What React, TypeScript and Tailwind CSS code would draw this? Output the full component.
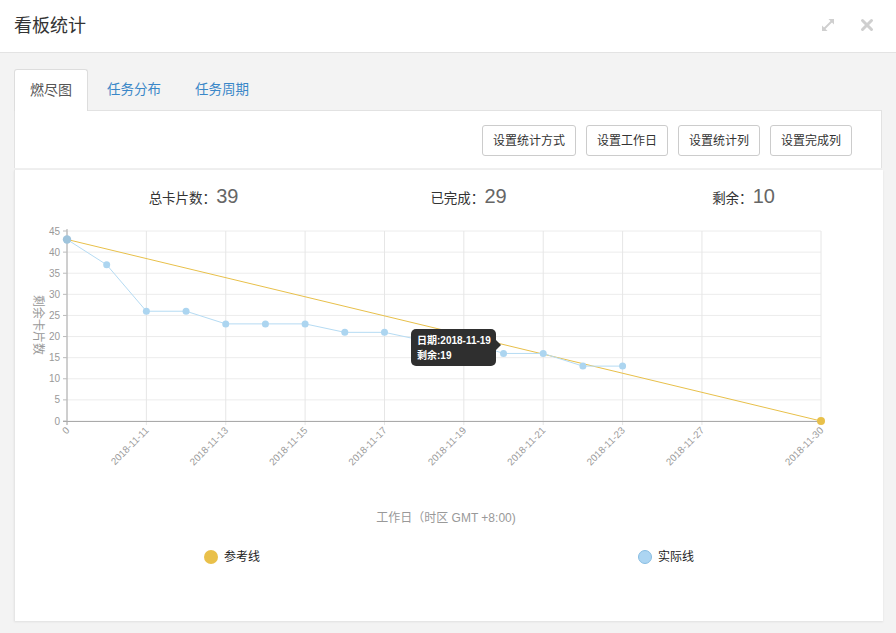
import React from "react";

const FONT = '"Liberation Sans", "Noto Sans CJK SC", sans-serif';

const step = (820 - 66) / 19;
const xAt = (i: number) => 66 + i * step;
const yAt = (v: number) => 422 - v * (190 / 45);

const actual = [43, 37, 26, 26, 23, 23, 23, 21, 21, 19, 19, 16, 16, 13, 13];
const labels: [number, string][] = [
  [0, "0"],
  [2, "2018-11-11"],
  [4, "2018-11-13"],
  [6, "2018-11-15"],
  [8, "2018-11-17"],
  [10, "2018-11-19"],
  [12, "2018-11-21"],
  [14, "2018-11-23"],
  [16, "2018-11-27"],
  [19, "2018-11-30"],
];

function Chart() {
  const yTicks = [0, 5, 10, 15, 20, 25, 30, 35, 40, 45];
  const pts = actual.map((v, i) => `${xAt(i)},${yAt(v)}`).join(" ");
  return (
    <svg width={868} height={310} viewBox="14 222 868 310" className="block">
      {yTicks.map((t) => (
        <g key={t}>
          <line x1={66} x2={820} y1={yAt(t)} y2={yAt(t)} stroke="#ececec" strokeWidth={1} />
          <line x1={62} x2={66} y1={yAt(t)} y2={yAt(t)} stroke="#bbb" strokeWidth={1} />
          <text x={59} y={yAt(t) + 3.5} textAnchor="end" fontSize={10} fill="#999" fontFamily={FONT}>
            {t}
          </text>
        </g>
      ))}
      {labels.map(([i, l]) => (
        <g key={l}>
          <line x1={xAt(i)} x2={xAt(i)} y1={232} y2={426} stroke="#e6e6e6" strokeWidth={1} />
          <text
            x={xAt(i) + 3}
            y={432}
            textAnchor="end"
            fontSize={9.8}
            fill="#999"
            fontFamily={FONT}
            transform={`rotate(-45 ${xAt(i) + 3} 432)`}
          >
            {l}
          </text>
        </g>
      ))}
      <line x1={66} x2={66} y1={230} y2={426} stroke="#aaa" strokeWidth={1} />
      <line x1={62} x2={822} y1={422.5} y2={422.5} stroke="#aaa" strokeWidth={1} />
      <line x1={66} y1={yAt(43)} x2={820} y2={422} stroke="#e8c04a" strokeWidth={1} />
      <polyline points={pts} fill="none" stroke="#b5dbf3" strokeWidth={1} />
      {actual.map((v, i) => (
        <circle key={i} cx={xAt(i)} cy={yAt(v)} r={3.5} fill="#acd5f0" />
      ))}
      <circle cx={66} cy={yAt(43)} r={4.2} fill="#9fc4dc" />
      <circle cx={820} cy={422} r={4} fill="#e8c04a" />
      <text
        x={33}
        y={326}
        textAnchor="middle"
        fontSize={12}
        fill="#999"
        fontFamily={FONT}
        transform="rotate(90 33 326)"
      >
        剩余卡片数
      </text>
      <text x={445} y={523} textAnchor="middle" fontSize={12} fill="#999" fontFamily={FONT}>
        工作日（时区 GMT +8:00)
      </text>
    </svg>
  );
}

export default function App() {
  return (
    <div className="w-[896px] h-[633px] bg-[#f3f3f3] overflow-hidden relative" style={{ fontFamily: FONT }}>
      <div className="h-[53px] bg-white border-b border-[#e3e3e3] flex items-center px-[14px]">
        <div className="text-[18px] text-[#333] flex-1">看板统计</div>
        <svg width="16" height="16" viewBox="0 0 16 16" className="mr-[24px] mt-[-2px]">
          <g stroke="#cfcfcf" strokeWidth="1.8" fill="none" strokeLinecap="round">
            <line x1="3" y1="13" x2="13" y2="3" />
          </g>
          <path d="M8.5 2 H14 V7.5 Z" fill="#cfcfcf" />
          <path d="M7.5 14 H2 V8.5 Z" fill="#cfcfcf" />
        </svg>
        <svg width="14" height="14" viewBox="0 0 14 14" className="mr-[8px] mt-[-2px]">
          <g stroke="#cfcfcf" strokeWidth="3" strokeLinecap="round">
            <line x1="2.5" y1="2.5" x2="11.5" y2="11.5" />
            <line x1="11.5" y1="2.5" x2="2.5" y2="11.5" />
          </g>
        </svg>
      </div>
      <div className="px-[14px] pt-[16px]">
        <div className="flex gap-[4px] h-[42px] items-end relative z-10">
          <div className="h-[42px] px-[15px] flex items-center bg-white border border-[#ddd] border-b-0 rounded-t-[3px] text-[14px] text-[#555]">
            燃尽图
          </div>
          <div className="h-[42px] px-[15px] flex items-center text-[13.5px] text-[#3a87c8]">任务分布</div>
          <div className="h-[42px] px-[15px] flex items-center text-[13.5px] text-[#3a87c8]">任务周期</div>
        </div>
        <div className="w-[868px] h-[58px] bg-white border border-[#e2e2e2] border-b-0 mt-[-1px] flex justify-end items-start pt-[14px] pr-[29px] gap-[10px]">
          {["设置统计方式", "设置工作日", "设置统计列", "设置完成列"].map((b) => (
            <div
              key={b}
              className="h-[31px] px-[10px] flex items-center border border-[#ccc] rounded-[3px] text-[12px] text-[#333] bg-white"
            >
              {b}
            </div>
          ))}
        </div>
        <div className="h-[2px] bg-[#efefef] w-[868px]" />
        <div className="w-[869px] h-[451px] bg-white border-l border-[#e6e6e6] shadow-[0_1px_2px_rgba(0,0,0,0.08)] relative">
          <div className="grid grid-cols-3 w-[825px] ml-[41px] h-[51px] items-center">
            <div className="text-center">
              <span className="text-[13.5px] text-[#333]">总卡片数：</span>
              <span className="text-[20px] text-[#666]">39</span>
            </div>
            <div className="text-center">
              <span className="text-[13.5px] text-[#333]">已完成：</span>
              <span className="text-[20px] text-[#666]">29</span>
            </div>
            <div className="text-center">
              <span className="text-[13.5px] text-[#333]">剩余：</span>
              <span className="text-[20px] text-[#666]">10</span>
            </div>
          </div>
          <Chart />
          <div className="grid grid-cols-2 mt-[17px]">
            <div className="flex justify-center items-center gap-[6px]">
              <span className="w-[14px] h-[14px] rounded-full bg-[#e9c04a]" />
              <span className="text-[12px] text-[#222]">参考线</span>
            </div>
            <div className="flex justify-center items-center gap-[6px]">
              <span className="w-[14px] h-[14px] rounded-full bg-[#acd5f2] border border-[#88bde2]" />
              <span className="text-[12px] text-[#222]">实际线</span>
            </div>
          </div>
          <div className="absolute left-[396px] top-[159px] w-[85px] h-[37px] bg-[#2f2f2f] rounded-[5px] text-white text-[10px] font-bold leading-[15px] pl-[6px] pt-[4px]">
            <div>日期:2018-11-19</div>
            <div>剩余:19</div>
            <div className="absolute right-[-5px] top-[11px] w-0 h-0 border-y-[5px] border-y-transparent border-l-[5px] border-l-[#2f2f2f]" />
          </div>
        </div>
      </div>
    </div>
  );
}
